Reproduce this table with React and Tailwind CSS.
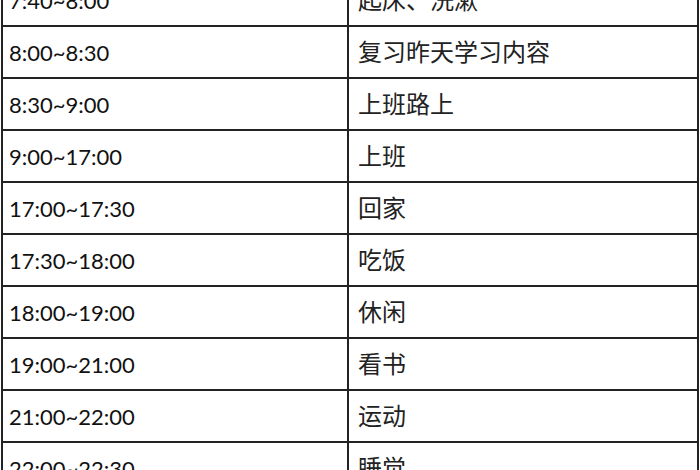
import React from "react";

const rows = [
  ["7:40~8:00", "起床、洗漱"],
  ["8:00~8:30", "复习昨天学习内容"],
  ["8:30~9:00", "上班路上"],
  ["9:00~17:00", "上班"],
  ["17:00~17:30", "回家"],
  ["17:30~18:00", "吃饭"],
  ["18:00~19:00", "休闲"],
  ["19:00~21:00", "看书"],
  ["21:00~22:00", "运动"],
  ["22:00~22:30", "睡觉"],
];

export default function App() {
  return (
    <div
      className="w-[700px] h-[470px] overflow-hidden bg-white"
      style={{ fontFamily: "Lato, 'Noto Sans CJK SC', sans-serif" }}
    >
      <div className="-mt-[27px] ml-[1px] w-[698px] border-l-2 border-r-2 border-[#222]">
        {rows.map(([time, task], i) => (
          <div key={i} className="flex h-[52px] border-t-2 border-[#222]">
            <div className="w-[346px] border-r-2 border-[#222] flex items-center pl-[6px] text-[22px] text-[#111]">
              {time}
            </div>
            <div className="flex-1 flex items-center pl-[9px] text-[24px] text-[#222]">
              {task}
            </div>
          </div>
        ))}
      </div>
    </div>
  );
}
